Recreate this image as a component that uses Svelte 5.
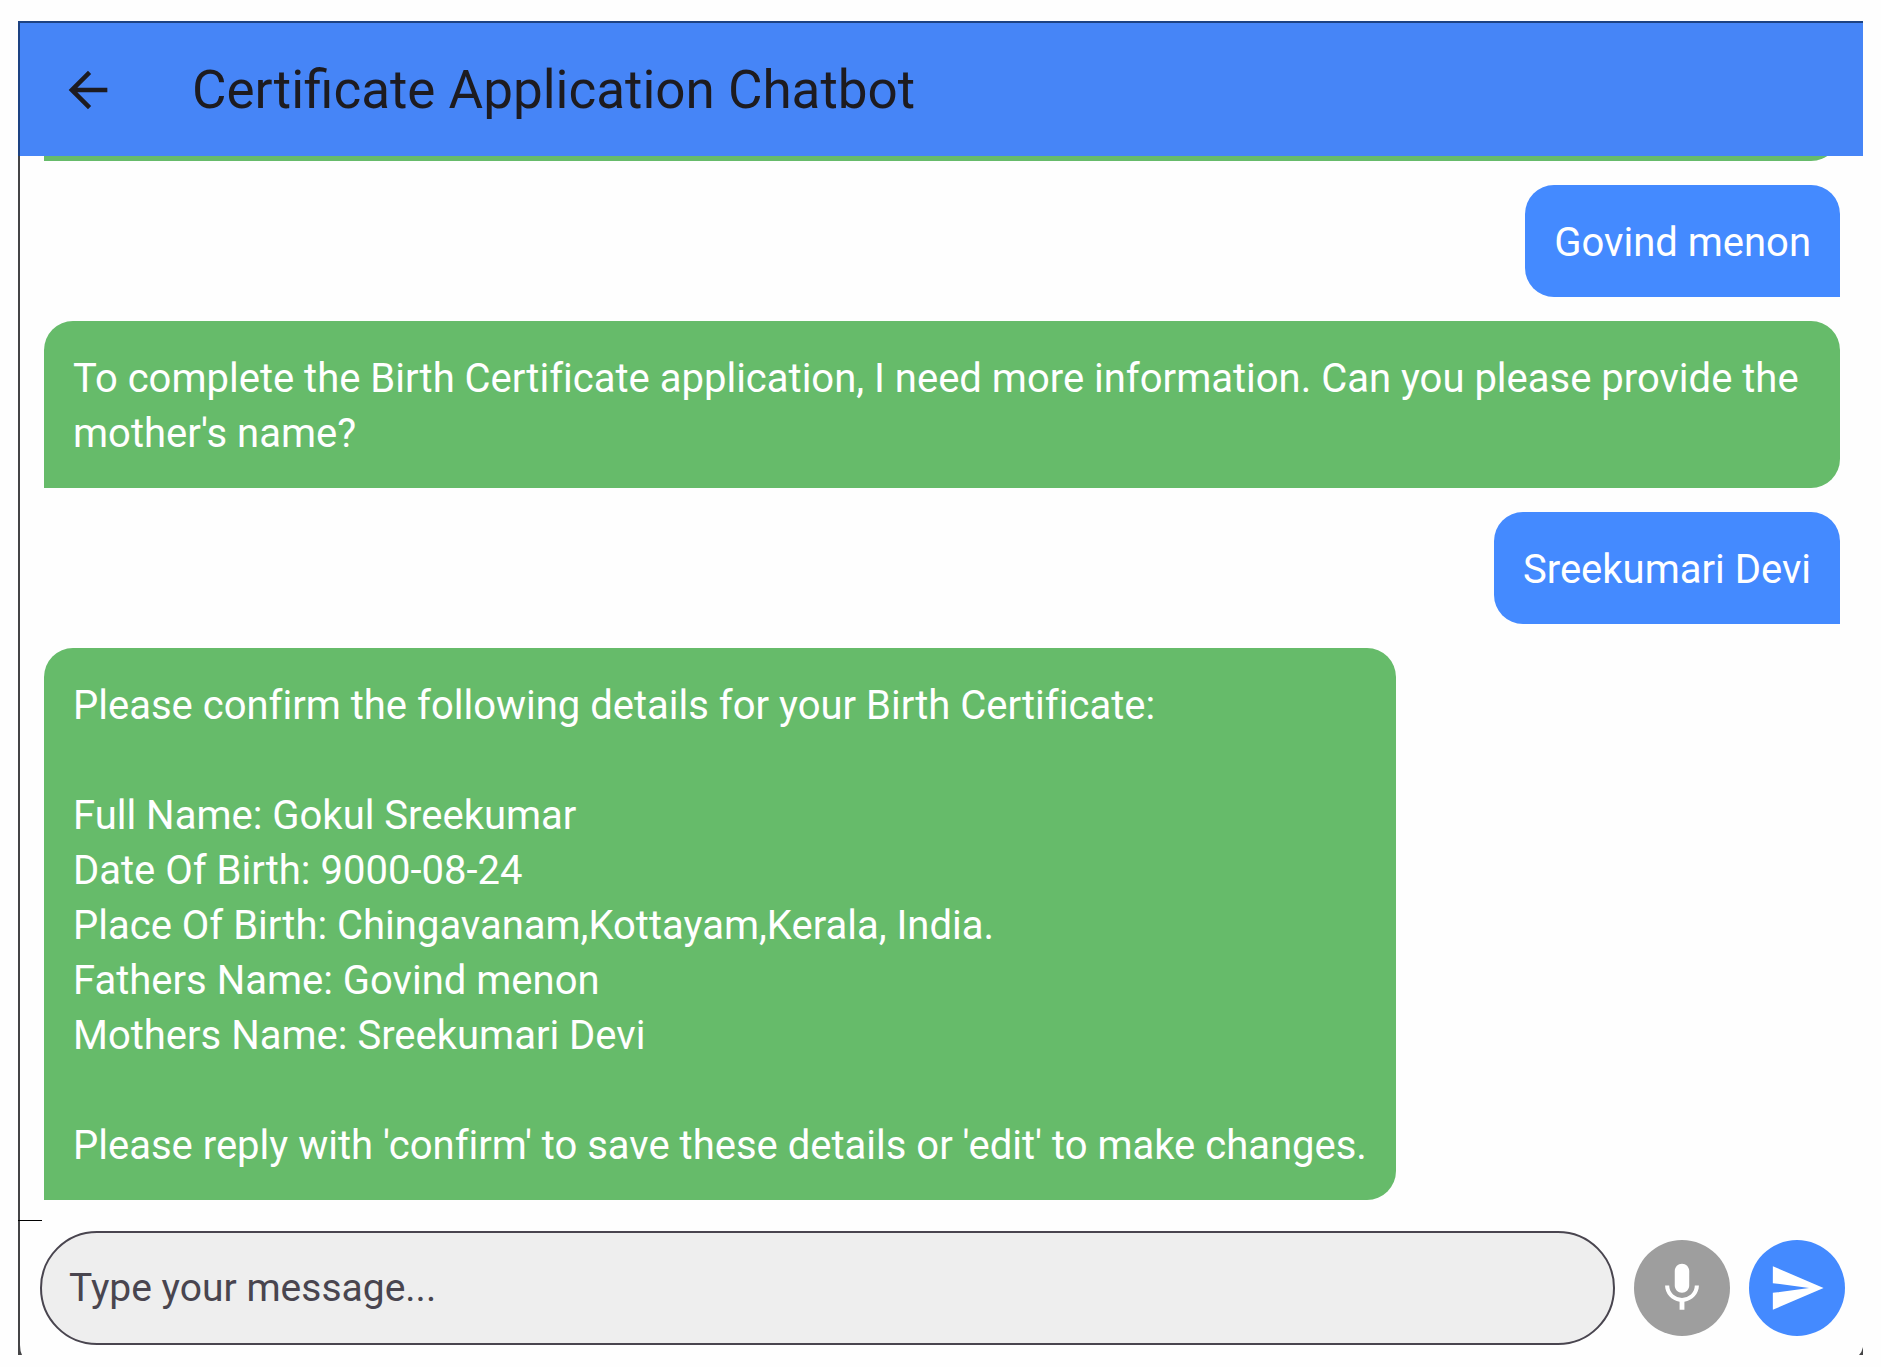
<script>
  let draft = $state('');

  let messages = $state([
    { from: 'bot', lines: [] },
    { from: 'user', lines: ['Govind menon'] },
    {
      from: 'bot',
      lines: [
        "To complete the Birth Certificate application, I need more information. Can you please provide the mother's name?"
      ]
    },
    { from: 'user', lines: ['Sreekumari Devi'] },
    {
      from: 'bot',
      lines: [
        'Please confirm the following details for your Birth Certificate:',
        '',
        'Full Name: Gokul Sreekumar',
        'Date Of Birth: 9000-08-24',
        'Place Of Birth: Chingavanam,Kottayam,Kerala, India.',
        'Fathers Name: Govind menon',
        'Mothers Name: Sreekumari Devi',
        '',
        "Please reply with 'confirm' to save these details or 'edit' to make changes."
      ]
    }
  ]);

  // Add the typed message to the conversation
  function sendMessage(event) {
    event.preventDefault();
    const text = draft.trim();
    if (!text) return;
    messages.push({ from: 'user', lines: [text] });
    draft = '';
  }
</script>

<main class="screen">
  <header class="app-bar">
    <button class="back-btn" aria-label="Back">
      <svg viewBox="0 0 24 24"><path d="M20 11.1H7.6l5.7-5.7L12 4l-8 8 8 8 1.3-1.4-5.7-5.7H20z" /></svg>
    </button>
    <h1>Certificate Application Chatbot</h1>
  </header>

  <section class="chat">
    {#each messages as message}
      <p class="bubble {message.from}">{message.lines.join('\n')}</p>
    {/each}
  </section>

  <form class="composer" onsubmit={sendMessage}>
    <input type="text" bind:value={draft} placeholder="Type your message..." aria-label="Type your message" />
    <button type="button" class="round-btn mic-btn" aria-label="Voice input">
      <svg viewBox="0 0 24 24">
        <path d="M12 14c1.66 0 2.99-1.34 2.99-3L15 5c0-1.66-1.34-3-3-3S9 3.34 9 5v6c0 1.66 1.34 3 3 3zm5.3-3c0 3-2.54 5.1-5.3 5.1S6.7 14 6.7 11H5c0 3.41 2.72 6.23 6 6.72V21h2v-3.28c3.28-.48 6-3.3 6-6.72h-1.7z" />
      </svg>
    </button>
    <button type="submit" class="round-btn send-btn" aria-label="Send">
      <svg viewBox="0 0 24 24"><path d="M2.01 21L23 12 2.01 3 2 10l15 2-15 2z" /></svg>
    </button>
  </form>

  <span class="tick"></span>
  <svg class="corner left" viewBox="0 0 4 10"><path d="M0 0h2q0 6 2 10H0z" /></svg>
  <svg class="corner right" viewBox="0 0 4 10"><path d="M4 2v8H0q3-3 4-8z" /></svg>
</main>

<style>
  :global(body) {
    margin: 0;
    background: #fefefe;
  }

  * {
    box-sizing: border-box;
  }

  .screen {
    position: relative;
    display: flex;
    flex-direction: column;
    height: calc(100vh - 33px);
    margin: 21px 18px 12px;
    overflow: hidden;
    font-family: Roboto, sans-serif;
  }

  .app-bar {
    display: flex;
    align-items: center;
    gap: 75px;
    flex: none;
    height: 135px;
    padding: 0 39px;
    background: #4685f7;
    border-top: 2px solid #1d4282;
    border-left: 2px solid #1d4282;
    color: #1d1b20;
  }

  h1 {
    margin: 0;
    font-size: 53px;
    font-weight: 400;
    line-height: 68px;
  }

  button {
    display: flex;
    align-items: center;
    justify-content: center;
    padding: 0;
    border: none;
    background: none;
    color: inherit;
    cursor: pointer;
  }

  button svg {
    width: 58px;
    height: 58px;
    fill: currentColor;
  }

  .chat {
    display: flex;
    flex: 1;
    flex-direction: column;
    justify-content: flex-end;
    gap: 24px;
    min-height: 0;
    padding: 0 23px 31px 24px;
    border-left: 2px solid #444446;
    overflow: hidden;
  }

  .bubble {
    flex: none;
    max-width: 100%;
    min-height: 112px;
    margin: 0;
    padding: 30px 29px 27px;
    color: #fff;
    font-size: 40px;
    font-variant-ligatures: none;
    line-height: 55px;
    white-space: pre-wrap;
  }

  .bot {
    align-self: flex-start;
    background: #66bb6a;
    border-radius: 29px 29px 29px 0;
  }

  .bot:empty {
    width: 100%;
  }

  .user {
    align-self: flex-end;
    background: #448aff;
    border-radius: 29px 29px 0 29px;
  }

  .composer {
    display: flex;
    align-items: center;
    gap: 19px;
    flex: none;
    padding: 0 18px 10px 20px;
    border-left: 2px solid #444446;
  }

  input {
    flex: 1;
    min-width: 0;
    height: 114px;
    padding: 0 27px;
    border: 2px solid #49454f;
    border-radius: 57px;
    background: #eee;
    color: #1d1b20;
    font-family: inherit;
    font-size: 39px;
  }

  input::placeholder {
    color: #49454f;
    opacity: 1;
  }

  .round-btn {
    flex: none;
    width: 96px;
    height: 96px;
    border-radius: 50%;
    color: #fff;
  }

  .mic-btn {
    background: #9e9e9e;
  }

  .send-btn {
    background: #448aff;
  }

  .tick {
    position: absolute;
    left: 0;
    bottom: 134px;
    width: 24px;
    height: 1px;
    background: #000;
  }

  .corner {
    position: absolute;
    bottom: 0;
    width: 4px;
    height: 10px;
    fill: #444446;
  }

  .left {
    left: 0;
  }

  .right {
    right: 0;
  }
</style>
